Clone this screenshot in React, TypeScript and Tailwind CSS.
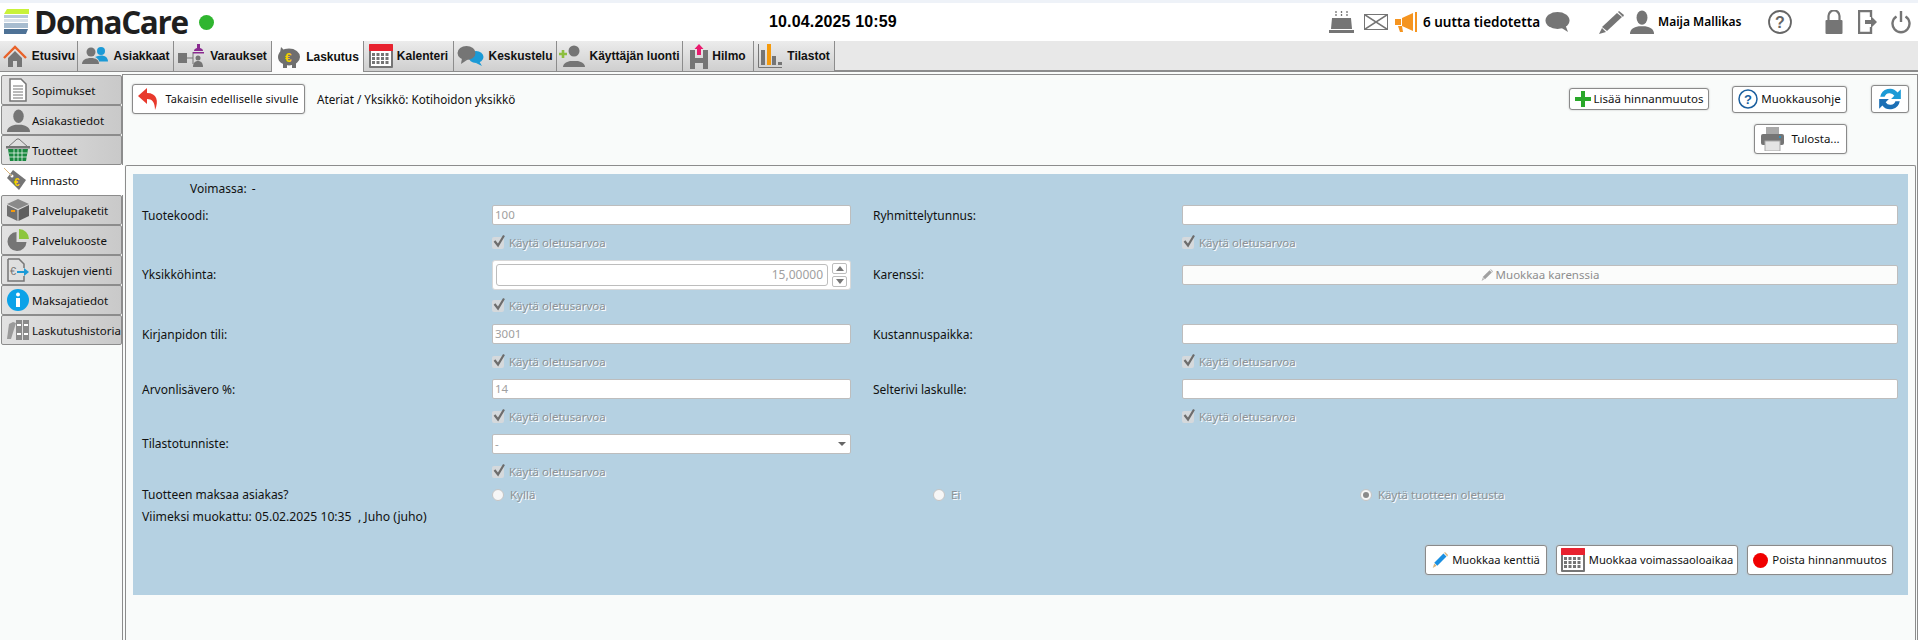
import React from "react";

const F = "font-['Noto_Sans','Open_Sans',sans-serif]";

function Home() { return <svg width="26" height="26" viewBox="0 0 26 26"><path d="M2 15 13 4l11 11" fill="none" stroke="#e8622a" strokeWidth="2.400"/><path d="M6 15 13 8l7 7v9h-5v-6h-4v6H6z" fill="#757575"/></svg>; }
function Users() { return <svg width="28" height="24" viewBox="0 0 28 24"><circle cx="10" cy="8" r="4.500" fill="#757575"/><path d="M1 20c0-4 4-6 9-6s8 2 8 6z" fill="#757575"/><circle cx="20" cy="7" r="4" fill="#1b9ad6"/><path d="M14 13c2-1 4-1.500 6-1.500 4 0 7 2 7 6h-9c0-2-2-3.500-4-4.500z" fill="#1b9ad6"/></svg>; }
function Stamp() { return <svg width="28" height="26" viewBox="0 0 28 26"><rect x="0" y="10" width="9" height="10" fill="#757575"/><path d="M9 15h6M15 9v12" stroke="#757575" fill="none"/><path d="M19 1h3v4c2 1 3 1 3 3h-9c0-2 1-2 3-3z" fill="#8a2a90"/><rect x="15" y="9" width="11" height="1.500" fill="#8a2a90"/><circle cx="20" cy="15" r="2.500" fill="#757575"/><path d="M15 24c0-4 2-6 5-6s5 2 5 6z" fill="#757575"/></svg>; }
function Piggy() { return <svg width="26" height="24" viewBox="0 0 26 24"><ellipse cx="13" cy="12" rx="11" ry="8.500" fill="#6f6f6f"/><path d="M5 2l4 4-5 2zM7 18h4v5H7zM16 18h4v5h-4z" fill="#6f6f6f"/><text x="9" y="17" fontSize="12" fontWeight="700" fill="#f5d000" fontFamily="Liberation Sans">€</text></svg>; }
function Cal({ s = 24 }: { s?: number }) { return <svg width={s} height={s} viewBox="0 0 24 24"><rect x="0" y="0" width="24" height="24" rx="1" fill="#757575"/><path d="M0 1a1 1 0 0 1 1-1h22a1 1 0 0 1 1 1v6H0z" fill="#e8222f"/><rect x="2" y="7" width="20" height="15" fill="#fff"/><g fill="#757575">{[3,7.500,12,16.500].map(x=>[9,13,17].map(y=><rect key={x+"-"+y} x={x} y={y} width="3" height="3"/>))}</g></svg>; }
function Chat() { return <svg width="27" height="22" viewBox="0 0 27 22"><ellipse cx="19" cy="12" rx="7.500" ry="6" fill="#1b9ad6"/><path d="M22 16l3 5-6-3z" fill="#1b9ad6"/><ellipse cx="9.500" cy="8" rx="9" ry="7" fill="#757575"/><path d="M5 13l-1 6 6-4z" fill="#757575"/></svg>; }
function UserAdd() { return <svg width="26" height="24" viewBox="0 0 26 24"><path d="M0 10h8M4 6v8" stroke="#8dbf3f" strokeWidth="2.600"/><circle cx="15" cy="7" r="5.500" fill="#757575"/><path d="M4 23c0-3 3-5 7-6h8c4 1 7 3 7 6z" fill="#757575"/></svg>; }
function Hilmo() { return <svg width="18" height="25" viewBox="0 0 18 25"><path d="M0 6h5v8h8V6h5v19h-5v-6H5v6H0z" fill="#757575"/><path d="M9 0l4.500 5H11v6H7V5H4.500z" fill="#ea1a6e"/></svg>; }
function Stats() { return <svg width="25" height="25" viewBox="0 0 25 25"><path d="M.5 0v23.500H24" fill="none" stroke="#757575"/><rect x="3" y="6" width="4" height="15" fill="#757575"/><rect x="9" y="0" width="4" height="21" fill="#f59a0c"/><rect x="14" y="12" width="4" height="9" fill="#757575"/><rect x="20" y="18" width="4" height="3" fill="#757575"/></svg>; }
function Person({ s = 22 }: { s?: number }) { return <svg width={s} height={s} viewBox="0 0 22 22"><ellipse cx="11" cy="7" rx="5" ry="6.500" fill="#757575"/><path d="M0 22c0-4 3-6 8-7h6c5 1 8 3 8 7z" fill="#757575"/></svg>; }
function Pencil({ c = "#757575", t = "#757575", s = 21 }: { c?: string; t?: string; s?: number }) { return <svg width={s} height={s} viewBox="0 0 21 21"><path d="M15 2l4 4L7 18l-4-4z" fill={c}/><path d="M16 1l1-1 4 4-1 2z" fill={t}/><path d="M3 15l3 3-5 3z" fill={t}/></svg>; }
function Doc() { return <svg width="18" height="24" viewBox="0 0 18 24"><path d="M1 1h11l5 5v17H1z" fill="#fff" stroke="#757575" strokeWidth="1.500"/><path d="M4 8h10M4 11h10M4 14h10M4 17h10M4 20h10" stroke="#757575"/></svg>; }
function Basket() { return <svg width="24" height="24" viewBox="0 0 24 24"><path d="M2 9 11 1h2l9 8" stroke="#757575" fill="none"/><rect x="0" y="8" width="24" height="2.500" fill="#757575"/><path d="M2 11h20l-2 12H4z" fill="#19883f"/><path d="M8 11v12M12 11v12M16 11v12M3 15h18M3 19h18" stroke="#fff" strokeWidth=".7"/></svg>; }
function Tag() { return <svg width="24" height="24" viewBox="0 0 24 24"><path d="M9 2l13 10-7 10L3 10z" fill="#757575"/><circle cx="8" cy="8" r="1.500" fill="#fff"/><path d="M0 0l8 8" stroke="#d8b37a"/><text x="10" y="18" fontSize="10" fontWeight="700" fill="#f5d000" fontFamily="Liberation Sans">€</text></svg>; }
function Box() { return <svg width="22" height="22" viewBox="0 0 22 22"><path d="M11 0l11 5-11 5L0 5z" fill="#8a8a8a"/><path d="M0 6l10.500 5v11L0 17z" fill="#6f6f6f"/><path d="M22 6l-10.500 5v11L22 17z" fill="#5f5f5f"/><rect x="4" y="11" width="4" height="2" fill="#f59a0c"/></svg>; }
function Pie() { return <svg width="22" height="22" viewBox="0 0 22 22"><path d="M9.500 3v10h10a9.500 9.500 0 1 1-10-10z" fill="#757575"/><path d="M12 0a10 10 0 0 1 10 10H12z" fill="#8dc63f"/></svg>; }
function Export() { return <svg width="22" height="24" viewBox="0 0 22 24"><path d="M1 1h11l5 5v4M17 18v5H1V1" fill="none" stroke="#757575" strokeWidth="1.500"/><text x="3" y="17" fontSize="11" fill="#757575" fontFamily="Liberation Sans">€</text><path d="M10 13h7v-3l5 4-5 4v-3h-7z" fill="#1b9ad6"/></svg>; }
function Info() { return <svg width="22" height="22" viewBox="0 0 22 22"><circle cx="11" cy="11" r="11" fill="#0ba2e8"/><circle cx="11" cy="5.500" r="2" fill="#fff"/><rect x="9" y="9" width="4" height="9" fill="#fff"/></svg>; }
function Binders() { return <svg width="23" height="20" viewBox="0 0 23 20"><path d="M2 4l4-2 3 1-5 16H0z" fill="#9a9a9a"/><rect x="9" y="0" width="6" height="20" fill="#8a8a8a"/><rect x="16" y="0" width="6" height="20" fill="#8a8a8a"/><path d="M10 5h4M17 5h4M10 14h4M17 14h4" stroke="#fff" strokeWidth="2"/></svg>; }
function Check() { return <span className="relative block h-[12px] w-[12px] rounded-[2px] bg-[#d5d9dc]"><svg className="absolute -top-[3px] left-0" width="14" height="15" viewBox="0 0 14 15"><path d="M2.500 7l3.500 4.500L12 1.500" fill="none" stroke="#6d6d6d" strokeWidth="2.200"/></svg></span>; }

const tabs: [string, React.ReactNode, string, boolean?][] = [
  ["Etusivu", <Home />, "w-[78px]"],
  ["Asiakkaat", <Users />, "w-[96px]"],
  ["Varaukset", <Stamp />, "w-[98px]"],
  ["Laskutus", <Piggy />, "w-[92px]", true],
  ["Kalenteri", <Cal />, "w-[90px]"],
  ["Keskustelu", <Chat />, "w-[103px]"],
  ["Käyttäjän luonti", <UserAdd />, "w-[126px]"],
  ["Hilmo", <Hilmo />, "w-[71px]"],
  ["Tilastot", <Stats />, "w-[81px]"],
];

const side: [string, React.ReactNode, boolean?][] = [
  ["Sopimukset", <Doc />],
  ["Asiakastiedot", <Person s={23} />],
  ["Tuotteet", <Basket />],
  ["Hinnasto", <Tag />, true],
  ["Palvelupaketit", <Box />],
  ["Palvelukooste", <Pie />],
  ["Laskujen vienti", <Export />],
  ["Maksajatiedot", <Info />],
  ["Laskutushistoria", <Binders />],
];

const row = "grid grid-cols-[350px_359px_22px_309px_716px] items-center";
const inputCls = "flex h-[20px] items-center rounded-[2px] border border-[#bdbdbd] bg-white px-[2px] text-[11.500px] text-[#a0a0a0]";
const gray = "text-[11.500px] text-[#8e9296] [text-shadow:1px_1px_0_#fff]";

function Btn({ icon, children, cls }: { icon: React.ReactNode; children?: React.ReactNode; cls: string }) {
  return <div className={"flex shrink-0 items-center justify-center gap-[3px] rounded-[3px] border border-[#8a8a8a] bg-white text-[#111] shadow-[0_0_2px_#bbb] " + cls}>{icon}{children ? <span className="whitespace-nowrap">{children}</span> : null}</div>;
}
function CheckLabel() {
  return <div className="flex h-[18px] items-center gap-[5px]"><Check /><span className={gray}>Käytä oletusarvoa</span></div>;
}
function CheckRow({ cls, right = true }: { cls: string; right?: boolean }) {
  return <div className={row + " " + cls}><span /><CheckLabel /><span /><span />{right ? <CheckLabel /> : <span />}</div>;
}
function Label({ children }: { children: React.ReactNode }) { return <span className="mt-[1px] text-[12px] text-[#111]">{children}</span>; }
function Radio({ checked, label }: { checked?: boolean; label: string }) {
  return <div className="flex items-center gap-[6px]"><span className="flex h-[12px] w-[12px] items-center justify-center rounded-full border border-[#c5c5c5] bg-[#f6f6f6]">{checked ? <span className="h-[6px] w-[6px] rounded-full bg-[#8a8a8a]" /> : null}</span><span className={gray}>{label}</span></div>;
}

export default function App() {
  return (
    <div className={F + " h-[640px] w-[1918px] overflow-hidden bg-white text-[12px] text-[#111]"}>
      <div className="h-[3px] bg-[#eef2f8]" />
      <header className="flex h-[38px] items-center">
        <div className="flex w-[769px] items-center">
          <svg className="ml-[4px]" width="25" height="26" viewBox="0 0 25 26"><path d="M3 0h22v5H0z" fill="#c9f23a"/><rect y="6" width="24" height="3" fill="#b8cadb"/><rect y="10" width="24" height="3" fill="#d8e1ea"/><rect y="14" width="24" height="5" fill="#a7bccf"/><path d="M0 20h24l-2 5H0z" fill="#4e7296"/></svg>
          <span className="ml-[5px] font-['Open_Sans',sans-serif] text-[31.500px] leading-none font-bold tracking-[-1.400px] text-[#1f1f1f]">DomaCare</span>
          <span className="ml-[11px] h-[15px] w-[15px] rounded-full bg-[#2fb52f]" />
        </div>
        <span className="font-['Liberation_Sans',sans-serif] text-[16px] font-bold tracking-[.15px] text-black">10.04.2025 10:59</span>
        <div className="ml-auto flex items-center pr-[7px]">
          <svg width="25" height="22" viewBox="0 0 25 22"><path d="M7 0v6M12.500 0v6M18 0v6" stroke="#757575" strokeWidth="1.300" strokeDasharray="2 1"/><path d="M3 7h19l1 11H2z" fill="#757575"/><rect x="0" y="19" width="25" height="3" fill="#757575"/></svg>
          <svg className="ml-[10px]" width="24" height="16" viewBox="0 0 24 16"><rect x=".5" y=".5" width="23" height="15" fill="#fff" stroke="#757575"/><path d="M.5.5 23.500 15.500M23.500.5.500 15.500" stroke="#757575" strokeWidth="1.500"/></svg>
          <svg className="ml-[7px]" width="23" height="20" viewBox="0 0 23 20"><path d="M0 7h6v6H0zM7 6l11-5v18L7 14zM20 0h2v20h-2zM3 14h4l1 6H5z" fill="#f5941f"/></svg>
          <span className="ml-[5px] w-[115px] text-[13.500px] font-semibold whitespace-nowrap text-black">6 uutta tiedotetta</span>
          <svg className="ml-[7px]" width="25" height="20" viewBox="0 0 25 20"><ellipse cx="12.500" cy="8.500" rx="12" ry="8.500" fill="#757575"/><path d="M15 15l8 5-3-8z" fill="#757575"/></svg>
          <svg className="ml-[29px]" width="25" height="23" viewBox="0 0 25 23"><path d="M18 2l5 4L8 20l-5-4z" fill="#757575"/><path d="M19 1l1-1 5 4-1 2z" fill="#757575"/><path d="M3 17l4 4-7 2z" fill="#757575"/></svg>
          <span className="ml-[6px]"><Person s={24} /></span>
          <span className="ml-[4px] w-[83px] text-[12px] font-semibold whitespace-nowrap text-black">Maija Mallikas</span>
          <svg className="ml-[27px]" width="24" height="24" viewBox="0 0 24 24"><circle cx="12" cy="12" r="11" fill="#fff" stroke="#666" strokeWidth="1.800"/><text x="12" y="17.500" textAnchor="middle" fontSize="16" fontWeight="700" fontFamily="Liberation Sans" fill="#666">?</text></svg>
          <svg className="ml-[33px]" width="18" height="24" viewBox="0 0 17 24"><path d="M3 10V6a5.500 5.500 0 0 1 11 0v4" fill="none" stroke="#757575" strokeWidth="2.200"/><rect y="10" width="17" height="14" rx="1" fill="#757575"/></svg>
          <svg className="ml-[15px]" width="20" height="24" viewBox="0 0 20 24"><path d="M13 7V1H1v22h12v-6" fill="none" stroke="#757575" strokeWidth="2.400"/><path d="M7 10h6V6l6 6-6 6v-4H7z" fill="#757575"/></svg>
          <svg className="ml-[13px]" width="20" height="24" viewBox="0 0 19 24"><path d="M5 6.500a8.500 8.500 0 1 0 9 0M9.500 1v11" fill="none" stroke="#757575" strokeWidth="2.400"/></svg>
        </div>
      </header>

      <nav className="flex h-[31px] border-b-[2px] border-[#8c8c8c] bg-[#e8e8e8]">
        {tabs.map(([t, ic, w, active]) => (
          <div key={t} className={w + " relative flex h-[30px] items-center justify-center gap-[4px] border-r border-[#8c8c8c] font-['Liberation_Sans',sans-serif] text-[12px] font-bold whitespace-nowrap text-[#111] " + (active ? "z-10 h-[31px] bg-[#fcfcfc]" : "bg-linear-to-b from-[#ececec] to-[#cfcfcf]")}>
            {ic}<span>{t}</span>
          </div>
        ))}
      </nav>

      <div className="flex h-[569px] bg-[#f9fbfa] pt-[2px]">
        <aside className="flex w-[122px] shrink-0 flex-col pt-[1px]">
          {side.map(([t, ic, active]) => (
            <div key={t} className={"flex h-[30px] items-center gap-[2px] whitespace-nowrap text-[11.500px] text-[#111] " + (active ? "relative z-10 -mr-[2px] bg-white pl-[4px]" : "ml-[1px] rounded-[2px] border border-[#8c8c8c] bg-linear-to-r from-[#e2e2e2] to-[#c9c9c9] pl-[4px]")}>
              <span className="flex w-[24px] justify-center">{ic}</span><span className="mt-[1px]">{t}</span>
            </div>
          ))}
        </aside>
        <main className="flex min-w-0 flex-1 flex-col border-t border-l border-r border-[#8c8c8c]">
          <div className="flex h-[90px] items-start pl-[9px]">
            <Btn cls="mt-[9px] h-[30px] w-[173px] gap-[6px] text-[11px] tracking-[.1px]" icon={<svg width="21" height="24" viewBox="0 0 21 24"><path d="M9 1 0 9l9 8v-5c5 0 8 3 8 11 4-9 2-17-8-17z" fill="#e8392c"/></svg>}>Takaisin edelliselle sivulle</Btn>
            <span className="mt-[16px] ml-[12px] text-[11.700px]">Ateriat / Yksikkö: Kotihoidon yksikkö</span>
            <div className="ml-auto flex flex-col items-end pr-[8px]">
              <div className="mt-[10px] flex items-center">
                <Btn cls="h-[22px] w-[140px] text-[11.500px]" icon={<svg width="16" height="16" viewBox="0 0 16 16"><path d="M6 0h4v6h6v4h-6v6H6v-6H0V6h6z" fill="#2aa82a"/></svg>}>Lisää hinnanmuutos</Btn>
                <Btn cls="ml-[23px] h-[27px] w-[115px] text-[11.500px]" icon={<svg width="20" height="20" viewBox="0 0 20 20"><circle cx="10" cy="10" r="9" fill="#fff" stroke="#1b5f9e" strokeWidth="1.500"/><text x="10" y="15" textAnchor="middle" fontSize="13" fontWeight="700" fontFamily="Liberation Sans" fill="#1b5f9e">?</text></svg>}>Muokkausohje</Btn>
                <Btn cls="ml-[24px] h-[28px] w-[38px]" icon={<svg width="26" height="26" viewBox="0 0 24 24"><path d="M3 10a9 9 0 0 1 16-4l3-3v9h-9l3-3a5 5 0 0 0-9 1z" fill="#1b9ad6"/><path d="M21 14a9 9 0 0 1-16 4l-3 3v-9h9l-3 3a5 5 0 0 0 9-1z" fill="#1b6fb5"/></svg>} />
              </div>
              <div className="mt-[11px] mr-[62px]">
                <Btn cls="h-[30px] w-[93px] gap-[7px] text-[11.500px]" icon={<svg width="23" height="24" viewBox="0 0 23 24"><rect x="5" y="0" width="13" height="7" fill="#a9a9a9"/><rect x="0" y="7" width="23" height="11" rx="2" fill="#757575"/><rect x="4" y="14" width="15" height="10" fill="#e4e4e4" stroke="#a9a9a9"/><circle cx="19" cy="10" r="1" fill="#1b9ad6"/></svg>}>Tulosta...</Btn>
              </div>
            </div>
          </div>

          <section className="ml-[2px] mr-[1px] flex-1 rounded-t-[2px] border-t border-l border-r border-[#8c8c8c] px-[7px] pt-[8px]">
            <div className="h-[421px] bg-[#b5d1e2] pt-[6px] pr-[8px] pl-[9px]">
              <div className="flex h-[18px] items-center gap-[5px] pl-[48px] text-[12px]"><span>Voimassa:</span><span>-</span></div>

              <div className={row + " mt-[7px]"}><Label>Tuotekoodi:</Label><div className={inputCls}>100</div><span /><Label>Ryhmittelytunnus:</Label><div className={inputCls} /></div>
              <CheckRow cls="mt-[9px]" />

              <div className={row + " mt-[8px] h-[30px]"}>
                <span className="text-[12px] text-[#111]">Yksikköhinta:</span>
                <div className="flex h-[30px] items-center gap-[4px] rounded-[3px] border border-[#d8d8d8] bg-white px-[3px]">
                  <div className="flex h-[22px] flex-1 items-center justify-end rounded-[3px] border border-[#bdbdbd] pr-[4px] text-[12px] text-[#a0a0a0]">15,00000</div>
                  <div className="flex flex-col gap-[2px]">
                    <span className="flex h-[11px] w-[15px] items-center justify-center rounded-[2px] border border-[#bdbdbd]"><span className="h-0 w-0 border-x-[4px] border-b-[5px] border-x-transparent border-b-[#777]" /></span>
                    <span className="flex h-[11px] w-[15px] items-center justify-center rounded-[2px] border border-[#bdbdbd]"><span className="h-0 w-0 border-x-[4px] border-t-[5px] border-x-transparent border-t-[#777]" /></span>
                  </div>
                </div>
                <span /><span className="text-[12px] text-[#111]">Karenssi:</span>
                <div className="flex h-[20px] items-center justify-center gap-[3px] rounded-[2px] border border-[#bdbdbd] bg-[#fbfcfb] text-[11.500px] text-[#8e8e8e]"><Pencil s={12} c="#a0a0a0" t="#b9b9b9" />Muokkaa karenssia</div>
              </div>
              <CheckRow cls="mt-[7px]" right={false} />

              <div className={row + " mt-[9px]"}><Label>Kirjanpidon tili:</Label><div className={inputCls}>3001</div><span /><Label>Kustannuspaikka:</Label><div className={inputCls} /></div>
              <CheckRow cls="mt-[9px]" />

              <div className={row + " mt-[8px]"}><Label>Arvonlisävero %:</Label><div className={inputCls}>14</div><span /><Label>Selterivi laskulle:</Label><div className={inputCls} /></div>
              <CheckRow cls="mt-[9px]" />

              <div className={row + " mt-[8px]"}>
                <span className="text-[12px] text-[#111]">Tilastotunniste:</span>
                <div className={inputCls + " justify-between bg-[#fbfcfb] pr-[4px]"}><span>-</span><span className="h-0 w-0 border-x-[4px] border-t-[4px] border-x-transparent border-t-[#666]" /></div>
              </div>
              <CheckRow cls="mt-[9px]" right={false} />

              <div className="mt-[5px] grid h-[18px] grid-cols-[350px_441px_427px_1fr] items-center">
                <span className="text-[12px] text-[#111]">Tuotteen maksaa asiakas?</span>
                <Radio label="Kyllä" /><Radio label="Ei" /><Radio checked label="Käytä tuotteen oletusta" />
              </div>
              <div className="mt-[4px] flex h-[18px] items-center text-[12.200px] whitespace-pre">Viimeksi muokattu: 05.02.2025 10:35  , Juho (juho)</div>

              <div className="mt-[19px] flex justify-end gap-[9px] pr-[7px]">
                <Btn cls="h-[30px] w-[122px] gap-[4px] text-[11.200px]" icon={<Pencil s={16} c="#1b8fe0" t="#d8b37a" />}>Muokkaa kenttiä</Btn>
                <Btn cls="h-[30px] w-[182px] gap-[4px] text-[11.200px]" icon={<Cal />}>Muokkaa voimassaoloaikaa</Btn>
                <Btn cls="h-[30px] w-[146px] gap-[4px] text-[11.400px]" icon={<span className="h-[15px] w-[15px] rounded-full bg-[#f00000]" />}>Poista hinnanmuutos</Btn>
              </div>
            </div>
          </section>
        </main>
      </div>
    </div>
  );
}
